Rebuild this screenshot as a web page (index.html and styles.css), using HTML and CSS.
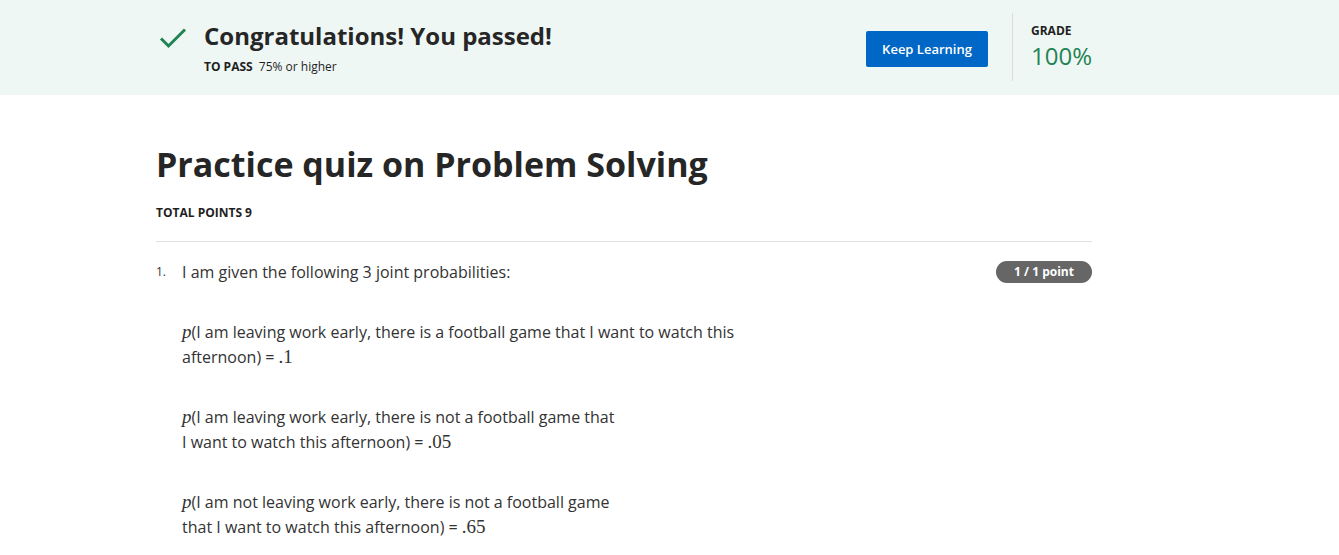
FILE: index.html
```html
<!DOCTYPE html>
<html lang="en">
<head>
<meta charset="utf-8">
<link rel="stylesheet" href="styles.css">
</head>
<body>
<header class="banner">
  <div class="banner-inner">
    <div class="result">
      <svg class="check" width="30" height="24" viewBox="0 0 30 24" aria-hidden="true">
        <path d="M3 12.5 L10.5 20 L27 3.5" fill="none" stroke="#1f8354" stroke-width="3"/>
      </svg>
      <div class="result-text">
        <div class="result-title">Congratulations! You passed!</div>
        <div class="result-sub"><span class="label">TO PASS</span> 75% or higher</div>
      </div>
    </div>
    <div class="actions">
      <button class="btn">Keep Learning</button>
      <div class="grade">
        <div class="label">GRADE</div>
        <div class="grade-value">100%</div>
      </div>
    </div>
  </div>
</header>
<main class="content">
  <h1 class="quiz-title">Practice quiz on Problem Solving</h1>
  <div class="total label">TOTAL POINTS 9</div>
  <section class="question">
    <div class="q-num">1.</div>
    <div class="q-body">
      <p class="q-prompt">I am given the following 3 joint probabilities:</p>
      <p class="q-para"><span class="m-i">p</span>(I am leaving work early, there is a football game that I want to watch this<br>afternoon) = <span class="m">.1</span></p>
      <p class="q-para"><span class="m-i">p</span>(I am leaving work early, there is not a football game that<br>I want to watch this afternoon) = <span class="m">.05</span></p>
      <p class="q-para"><span class="m-i">p</span>(I am not leaving work early, there is not a football game<br>that I want to watch this afternoon) = <span class="m">.65</span></p>
    </div>
    <div class="badge">1 / 1 point</div>
  </section>
</main>
</body>
</html>
```
FILE: styles.css
```css
* { box-sizing: border-box; }
html, body { margin: 0; padding: 0; }
body {
  font-family: "Open Sans", "Noto Sans", sans-serif;
  color: #1f1f1f;
  background: #fff;
}
.banner {
  background: #eff7f4;
  height: 95px;
}
.banner-inner {
  width: 936px;
  margin-left: 156px;
  height: 95px;
  display: flex;
  justify-content: space-between;
  align-items: flex-start;
}
.result {
  display: flex;
  align-items: flex-start;
  padding-top: 21px;
}
.check { margin: 5px 0 0 2px; }
.result-text { margin-left: 16px; }
.result-title {
  font-size: 24px;
  font-weight: 700;
  line-height: 30px;
  color: #262626;
}
.result-sub {
  margin-top: 8px;
  font-size: 12px;
  line-height: 16px;
  color: #1f1f1f;
}
.label {
  font-size: 12px;
  font-weight: 700;
  color: #1f1f1f;
}
.result-sub .label { margin-right: 3px; }
.actions {
  display: flex;
  align-items: flex-start;
  height: 95px;
}
.btn {
  margin-top: 31px;
  width: 122px;
  height: 36px;
  background: #0067c6;
  color: #fff;
  border: none;
  border-radius: 2px;
  font-family: inherit;
  font-size: 13px;
  font-weight: 600;
  padding: 0;
}
.grade {
  margin-left: 24px;
  margin-top: 13px;
  height: 68px;
  border-left: 1px solid #d9dedb;
  padding-left: 18px;
  padding-top: 10px;
  width: 80px;
}
.grade .label { line-height: 16px; }
.grade-value {
  font-size: 24px;
  font-weight: 400;
  color: #1f8354;
  line-height: 34px;
}
.content {
  width: 936px;
  margin-left: 156px;
}
.quiz-title {
  margin: 0;
  padding-top: 47px;
  font-size: 34px;
  line-height: 44px;
  font-weight: 700;
  color: #262626;
}
.total {
  margin-top: 19px;
  line-height: 16px;
}
.question {
  margin-top: 20px;
  border-top: 1px solid #e1e1e1;
  padding-top: 19px;
  display: flex;
  align-items: flex-start;
}
.q-num {
  width: 26px;
  font-size: 12px;
  line-height: 22px;
  color: #333;
}
.q-body { flex: 1; }
.q-prompt, .q-para {
  margin: 0;
  font-size: 16px;
  line-height: 25px;
  color: #333;
}
.q-prompt { line-height: 22px; }
.q-para { margin-top: 35px; }
.q-prompt + .q-para { margin-top: 37px; }
.m, .m-i {
  font-family: "Liberation Serif", "DejaVu Serif", serif;
  font-size: 19px;
  line-height: 1;
}
.m-i { font-style: italic; }
.badge {
  width: 96px;
  height: 22px;
  background: #666;
  color: #fff;
  border-radius: 11px;
  font-size: 12px;
  font-weight: 700;
  line-height: 22px;
  text-align: center;
}
```
